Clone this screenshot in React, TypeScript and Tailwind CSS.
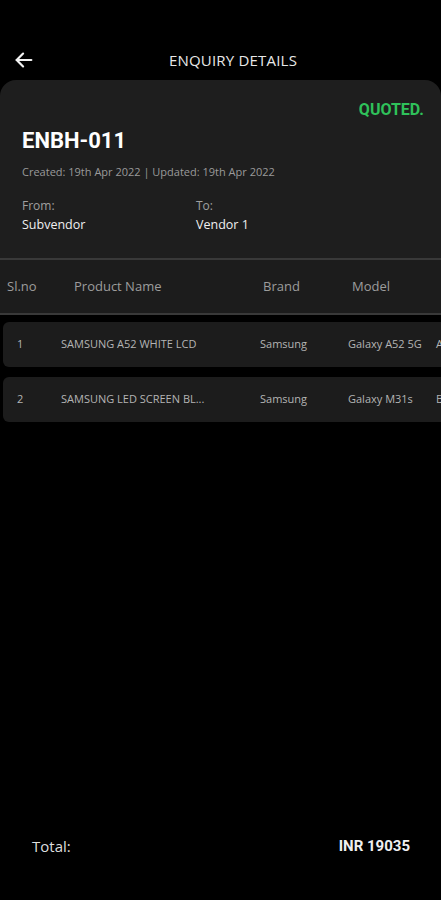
import React from "react";

function BackArrow() {
  return (
    <svg width="22" height="22" viewBox="0 0 24 24" fill="none" stroke="#f2f2f2" strokeWidth="2.4" strokeLinecap="round" strokeLinejoin="round">
      <path d="M20 12H4" />
      <path d="M11 5l-7 7 7 7" />
    </svg>
  );
}

const rows = [
  { n: "1", name: "SAMSUNG A52 WHITE LCD", brand: "Samsung", model: "Galaxy A52 5G", next: "A" },
  { n: "2", name: "SAMSUNG LED SCREEN BL...", brand: "Samsung", model: "Galaxy M31s", next: "B" },
];

export default function App() {
  return (
    <div className="min-h-screen bg-black flex flex-col" style={{ fontFamily: '"Open Sans", "Noto Sans", sans-serif' }}>
      <div className="pt-[40px]">
        <div className="relative h-[40px] flex items-center justify-center">
          <div className="absolute left-[13px] top-[9px]">
            <BackArrow />
          </div>
          <span className="text-[15px] text-[#e8e8e8] tracking-[0.2px] ml-[25px]">ENQUIRY DETAILS</span>
        </div>
      </div>

      <div className="w-full bg-[#1e1e1e] rounded-t-[16px] pt-[20px] pb-[24px] pl-[22px]">
        <div className="flex justify-end pr-[17px]">
          <span className="text-[16px] leading-[20px] font-bold text-[#2fc15a]" style={{ fontFamily: 'Roboto, sans-serif' }}>QUOTED.</span>
        </div>
        <div className="mt-[7px] text-[22px] leading-[28px] font-bold text-white" style={{ fontFamily: 'Roboto, sans-serif' }}>ENBH-011</div>
        <div className="mt-[9px] text-[11px] leading-[16px] text-[#9a9a9a]">Created: 19th Apr 2022 | Updated: 19th Apr 2022</div>
        <div className="mt-[18px] flex">
          <div className="w-[174px]">
            <div className="text-[12px] leading-[16px] text-[#a0a0a0]">From:</div>
            <div className="mt-[2px] text-[12.5px] leading-[18px] text-[#f0f0f0]">Subvendor</div>
          </div>
          <div>
            <div className="text-[12px] leading-[16px] text-[#a0a0a0]">To:</div>
            <div className="mt-[2px] text-[12.5px] leading-[18px] text-[#f0f0f0]">Vendor 1</div>
          </div>
        </div>
      </div>

      <div className="w-full overflow-hidden">
        <div className="h-[2px] bg-[#393939]" />
        <div className="h-[53px] bg-[#1c1c1c] flex items-center text-[13px] text-[#9c9c9c] whitespace-nowrap">
          <div className="w-[74px] shrink-0 pl-[7px]">Sl.no</div>
          <div className="w-[189px] shrink-0">Product Name</div>
          <div className="w-[89px] shrink-0">Brand</div>
          <div className="w-[89px] shrink-0">Model</div>
        </div>
        <div className="h-[2px] bg-[#393939]" />
        <div className="pl-[3px] pt-[7px] flex flex-col gap-[10px]">
          {rows.map((r) => (
            <div key={r.n} className="w-[700px] h-[45px] bg-[#1c1c1c] rounded-[6px] flex items-center text-[11px] text-[#b4b4b4] whitespace-nowrap">
              <div className="w-[58px] shrink-0 pl-[14px]">{r.n}</div>
              <div className="w-[199px] shrink-0">{r.name}</div>
              <div className="w-[88px] shrink-0">{r.brand}</div>
              <div className="w-[88px] shrink-0">{r.model}</div>
              <div className="w-[120px] shrink-0">{r.next}</div>
            </div>
          ))}
        </div>
      </div>

      <div className="flex-1" />

      <div className="flex items-center justify-between pl-[32px] pr-[31px] pb-[44px]">
        <span className="text-[15px] leading-[20px] text-[#dedede]">Total:</span>
        <span className="text-[15px] leading-[20px] font-bold text-[#f0f0f0]" style={{ fontFamily: 'Roboto, sans-serif' }}>INR 19035</span>
      </div>
    </div>
  );
}
